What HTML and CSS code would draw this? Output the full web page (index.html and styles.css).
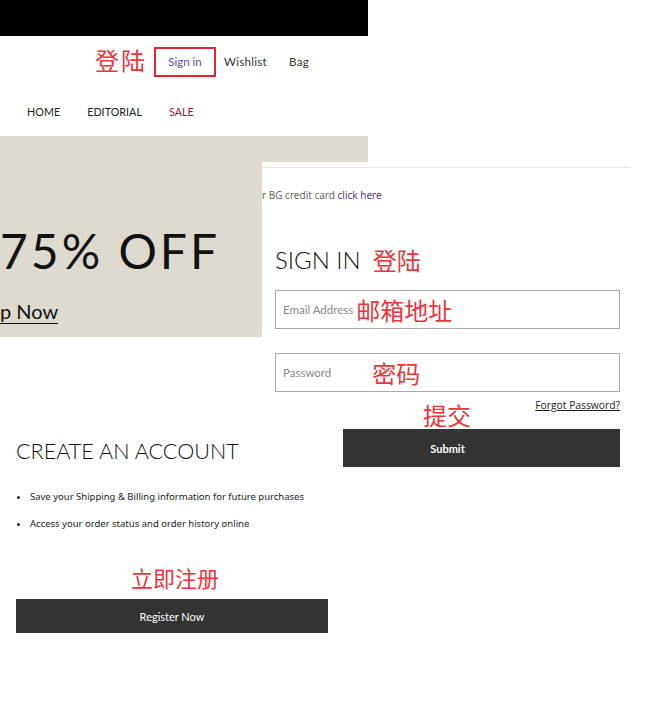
FILE: index.html
```html
<!DOCTYPE html>
<html lang="zh">
<head>
  <meta charset="UTF-8">
  <title>Sign in</title>
  <link rel="stylesheet" href="styles.css">
</head>
<body>

  <div class="page">

    <!-- upper shot: header + banner -->
    <div class="shot-top">
      <div class="black-bar"></div>

      <div class="account-row">
        <span class="note note-nav">登陆</span>
        <span class="signin-box">Sign in</span>
        <span class="account-link">Wishlist</span>
        <span class="account-link">Bag</span>
      </div>

      <div class="menu-row">
        <span class="menu-item">HOME</span>
        <span class="menu-item">EDITORIAL</span>
        <span class="menu-item sale">SALE</span>
      </div>

      <div class="banner">
        <div class="banner-title">75% OFF</div>
        <div class="banner-link">p Now</div>
      </div>
    </div>

    <!-- sign in panel lying over the banner -->
    <div class="signin-panel">
      <div class="panel-body">
        <div class="credit-line">r BG credit card <span class="purple">click here</span></div>

        <div class="signin-head">
          <span class="signin-title">SIGN IN</span>
          <span class="note">登陆</span>
        </div>

        <div class="field field-email">
          <span class="placeholder">Email Address</span>
          <span class="note note-email">邮箱地址</span>
        </div>

        <div class="field field-password">
          <span class="placeholder">Password</span>
          <span class="note note-password">密码</span>
        </div>

        <div class="forgot-row">
          <span class="note note-submit">提交</span>
          <span class="forgot">Forgot Password?</span>
        </div>

        <div class="dark-button submit-button">Submit</div>
      </div>
    </div>

    <!-- lower shot: create account -->
    <div class="shot-bottom">
      <div class="create-title">CREATE AN ACCOUNT</div>
      <ul class="benefits">
        <li>Save your Shipping &amp; Billing information for future purchases</li>
        <li>Access your order status and order history online</li>
      </ul>
      <div class="note note-register">立即注册</div>
      <div class="dark-button register-button">Register Now</div>
    </div>

  </div>

</body>
</html>
```

FILE: styles.css
```css
body {
  margin: 0;
  background: #fff;
  font-family: "Lato", "Noto Sans", sans-serif;
  color: #1a1a1a;
}

.page {
  position: relative;
  width: 645px;
  height: 711px;
  overflow: hidden;
}

/* red annotations */
.note {
  font-family: "Noto Sans CJK SC", sans-serif;
  color: #e8363a;
  font-size: 24px;
  line-height: 1;
}

/* upper shot */
.shot-top {
  width: 368px;
}

.black-bar {
  height: 36px;
  background: #000;
}

.account-row {
  display: flex;
  align-items: center;
  height: 51px;
  padding-left: 95px;
  font-size: 11.5px;
}

.note-nav {
  margin-right: 7px;
  margin-top: -3px;
  letter-spacing: 2px;
}

.signin-box {
  box-sizing: border-box;
  width: 62px;
  height: 30px;
  border: 2px solid #e2262c;
  color: #6a4b9e;
  display: flex;
  align-items: center;
  justify-content: center;
  margin-right: 8px;
}

.account-link {
  color: #333;
  margin-right: 22px;
  letter-spacing: 0.3px;
}

.menu-row {
  display: flex;
  gap: 27px;
  height: 49px;
  align-items: center;
  padding-left: 27px;
  font-size: 10.8px;
  color: #222;
}

.menu-item.sale {
  color: #a3162e;
}

.banner {
  height: 201px;
  background: #dedad0;
  padding-top: 91px;
  box-sizing: border-box;
}

.banner-title {
  font-size: 48px;
  line-height: 48px;
  letter-spacing: 3px;
  color: #111;
}

.banner-link {
  display: inline-block;
  margin-top: 26px;
  font-size: 20px;
  line-height: 20px;
  padding-bottom: 2px;
  border-bottom: 1px solid #111;
  color: #111;
}

/* sign in panel */
.signin-panel {
  position: absolute;
  left: 262px;
  top: 162px;
  width: 368px;
  padding-top: 5px;
  background: #fff;
}

.panel-body {
  border-top: 1px solid #e6e6e6;
  padding-top: 20px;
  padding-bottom: 8px;
}

.credit-line {
  font-family: "Noto Sans", sans-serif;
  font-size: 10px;
  color: #666;
}

.purple {
  color: #5a3596;
}

.signin-head {
  display: flex;
  align-items: center;
  gap: 12px;
  margin-top: 43px;
  padding-left: 13px;
}

.signin-title {
  font-size: 24px;
  font-weight: 300;
  color: #111;
}

.field {
  box-sizing: border-box;
  margin-left: 13px;
  width: 345px;
  height: 39px;
  border: 1px solid #aaa;
  display: flex;
  align-items: center;
  padding-left: 7px;
}

.field-email {
  margin-top: 16px;
}

.field-password {
  margin-top: 24px;
}

.placeholder {
  font-size: 11.5px;
  color: #888;
}

.note-email {
  margin-left: 3px;
}

.note-password {
  margin-left: 41px;
}

.forgot-row {
  position: relative;
  height: 37px;
  margin-left: 13px;
  width: 345px;
}

.note-submit {
  position: absolute;
  left: 148px;
  top: 11px;
}

.forgot {
  position: absolute;
  right: 0;
  top: 6px;
  font-family: "Open Sans", sans-serif;
  font-size: 10.3px;
  color: #222;
  text-decoration: underline;
}

.dark-button {
  background: #333;
  color: #fff;
  font-size: 11px;
  font-weight: 700;
  display: flex;
  align-items: center;
  justify-content: center;
}

.submit-button {
  box-sizing: border-box;
  margin-left: 81px;
  width: 277px;
  height: 38px;
  padding-right: 68px;
}

/* lower shot */
.shot-bottom {
  position: absolute;
  left: 0;
  top: 430px;
  width: 340px;
  padding-left: 16px;
  box-sizing: border-box;
}

.create-title {
  font-size: 21.6px;
  font-weight: 300;
  color: #111;
  margin-top: 8px;
}

.benefits {
  margin: 26px 0 0 0;
  padding-left: 14px;
  font-family: "Noto Sans", sans-serif;
  font-size: 9.5px;
  color: #222;
}

.benefits li {
  margin-bottom: 14px;
}

.note-register {
  font-size: 22px;
  margin-top: 36px;
  padding-left: 115px;
}

.register-button {
  margin-top: 11px;
  width: 312px;
  height: 34px;
  font-weight: 400;
}
```
